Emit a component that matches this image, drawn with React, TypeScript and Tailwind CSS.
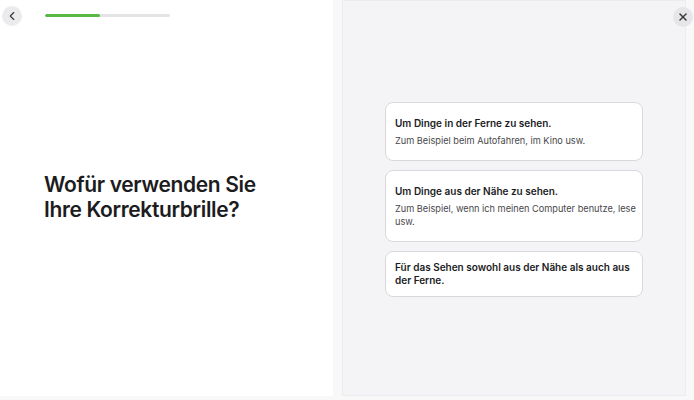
import { X, ChevronLeft } from 'lucide-react';

type Option = {
  title: string;
  hint?: string;
};

const options: Option[] = [
  { title: 'Um Dinge in der Ferne zu sehen.', hint: 'Zum Beispiel beim Autofahren, im Kino usw.' },
  { title: 'Um Dinge aus der Nähe zu sehen.', hint: 'Zum Beispiel, wenn ich meinen Computer benutze, lese usw.' },
  { title: 'Für das Sehen sowohl aus der Nähe als auch aus der Ferne.' },
];

function OptionCard({ option }: { option: Option }) {
  return (
    <button
      className={`w-full text-left bg-white border border-[#d9d9dd] rounded-[8px] pl-[9px] pr-[5px] ${
        option.hint ? 'pt-[14px] pb-[13px]' : 'py-[9px]'
      }`}
    >
      <p className="text-[10px] leading-[13px] font-semibold text-[#1c1c1e]">{option.title}</p>
      {option.hint && (
        <p className="mt-[4px] text-[9.2px] leading-[13px] text-[#48484b]">{option.hint}</p>
      )}
    </button>
  );
}

export default function App() {
  return (
    <div
      className="relative w-[694px] h-[400px] bg-[#f8f8f9] flex overflow-hidden"
      style={{ fontFamily: 'Inter, "Noto Sans", sans-serif' }}
    >
      {/* Question side */}
      <div className="relative w-[333px] h-[396px] bg-white flex flex-col">
        <div className="flex items-center h-[31px] pl-[2px]">
          <button className="w-[20px] h-[20px] rounded-full bg-[#ebebee] flex items-center justify-center text-[#3a3a3c]">
            <ChevronLeft size={14} strokeWidth={2} />
          </button>
          <div className="ml-[23px] w-[125px] h-[3px] rounded-full bg-[#e4e4e6] overflow-hidden">
            <div className="h-full w-[44%] rounded-full bg-[#57b846]" />
          </div>
        </div>
        <div className="flex-1 flex items-center pl-[44px] pb-[34px]">
          <h1 className="text-[21px] leading-[25px] font-semibold text-[#1c1c1e] tracking-[-0.35px]">
            Wofür verwenden Sie
            <br />
            Ihre Korrekturbrille?
          </h1>
        </div>
      </div>

      {/* Answer side */}
      <div className="ml-[9px] w-[344px] h-[396px] bg-[#f4f4f6] border border-[#ececef] flex items-center justify-center pt-[3px]">
        <div className="w-[258px] flex flex-col gap-[9px]">
          {options.map((o) => (
            <OptionCard key={o.title} option={o} />
          ))}
        </div>
      </div>

      <button className="absolute top-[7px] left-[673px] w-[20px] h-[20px] rounded-full bg-[#e6e6e9] flex items-center justify-center text-[#3a3a3c]">
        <X size={12} strokeWidth={3} />
      </button>
    </div>
  );
}
